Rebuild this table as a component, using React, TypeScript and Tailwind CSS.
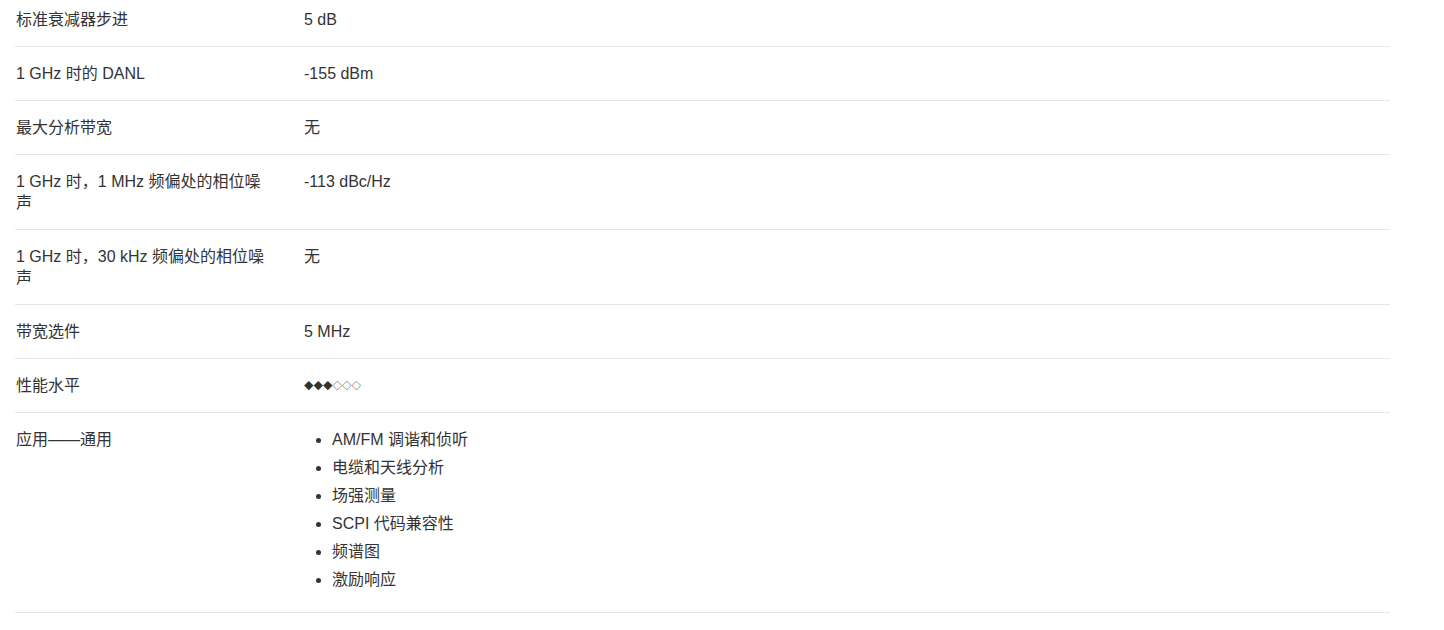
const rows: { label: string; value: React.ReactNode }[] = [
  { label: '标准衰减器步进', value: '5 dB' },
  { label: '1 GHz 时的 DANL', value: '-155 dBm' },
  { label: '最大分析带宽', value: '无' },
  { label: '1 GHz 时，1 MHz 频偏处的相位噪声', value: '-113 dBc/Hz' },
  { label: '1 GHz 时，30 kHz 频偏处的相位噪声', value: '无' },
  { label: '带宽选件', value: '5 MHz' },
  {
    label: '性能水平',
    value: <span className="block text-[9.5px] leading-[21px]">◆◆◆◇◇◇</span>,
  },
];

const apps = ['AM/FM 调谐和侦听', '电缆和天线分析', '场强测量', 'SCPI 代码兼容性', '频谱图', '激励响应'];

export default function App() {
  return (
    <div className="min-h-screen bg-white overflow-hidden">
      <div
        className="ml-[15px] w-[1375px] -mt-[7px] text-[16px] leading-[21px] text-[#333]"
        style={{ fontFamily: '"Liberation Sans", "Noto Sans CJK SC", sans-serif' }}
      >
        {rows.map((r) => (
          <div key={r.label} className="flex border-b border-[#e5e5e5] py-4">
            <div className="w-[289px] shrink-0 pl-px pr-[34px]">{r.label}</div>
            <div className="flex-1">{r.value}</div>
          </div>
        ))}
        <div className="flex border-b border-[#e5e5e5] py-4">
          <div className="w-[289px] shrink-0 pl-px pr-[34px]">应用——通用</div>
          <div className="flex-1">
            <ul className="list-disc pl-[28px]">
              {apps.map((a) => (
                <li key={a} className="mb-[7px] last:mb-[6px]">
                  {a}
                </li>
              ))}
            </ul>
          </div>
        </div>
      </div>
    </div>
  );
}
